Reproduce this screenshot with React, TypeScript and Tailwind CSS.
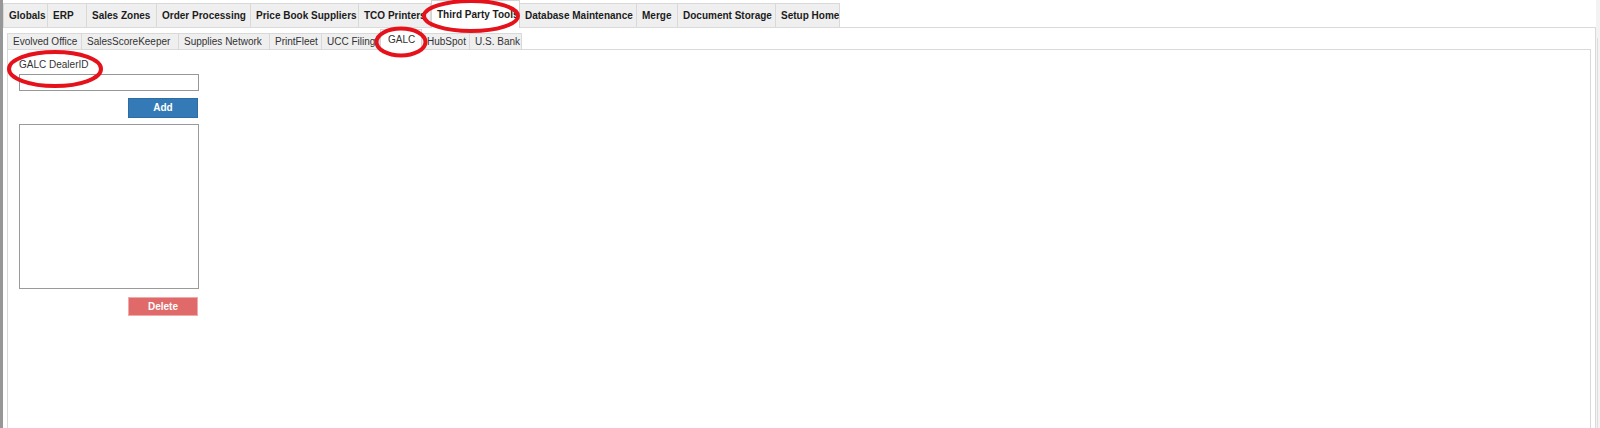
import React from 'react';

const TOP_TABS: { label: string; width: number; active?: boolean }[] = [
  { label: 'Globals', width: 45 },
  { label: 'ERP', width: 39 },
  { label: 'Sales Zones', width: 70 },
  { label: 'Order Processing', width: 94 },
  { label: 'Price Book Suppliers', width: 108 },
  { label: 'TCO Printers', width: 72 },
  { label: 'Third Party Tools', width: 89, active: true },
  { label: 'Database Maintenance', width: 117 },
  { label: 'Merge', width: 41 },
  { label: 'Document Storage', width: 98 },
  { label: 'Setup Home', width: 64 },
];

const SUB_TABS: { label: string; width: number; active?: boolean }[] = [
  { label: 'Evolved Office', width: 75 },
  { label: 'SalesScoreKeeper', width: 97 },
  { label: 'Supplies Network', width: 91 },
  { label: 'PrintFleet', width: 52 },
  { label: 'UCC Filing', width: 58 },
  { label: 'GALC', width: 42, active: true },
  { label: 'HubSpot', width: 48 },
  { label: 'U.S. Bank', width: 52 },
];

export default function App() {
  return (
    <div className="relative h-[428px] w-[1600px] overflow-hidden bg-white font-['Liberation_Sans',Arial,sans-serif]">
      <div className="flex h-full">
        {/* left window edge */}
        <div className="w-[3px] shrink-0 bg-[#979797]" />

        <div className="flex min-w-0 flex-1 flex-col pt-[3px]">
          {/* ── Main tabs ─────────────────────────────────────── */}
          <div className="relative z-10 flex h-[24px] items-end">
            {TOP_TABS.map((t, i) => (
              <div
                key={t.label}
                style={{ width: t.width }}
                className={`shrink-0 overflow-hidden whitespace-nowrap pl-[5px] text-[10px] font-bold text-[#1c1c1c] ${
                  t.active
                    ? '-mb-px h-[28px] border-x border-t border-[#d4d4d4] bg-white leading-[27px]'
                    : `h-[24px] border-t border-r border-[#d9d9d9] bg-[#efefef] leading-[23px] ${i === 0 ? 'border-l' : ''}`
                }`}
              >
                {t.label}
              </div>
            ))}
          </div>

          {/* ── Main panel ────────────────────────────────────── */}
          <div className="flex flex-1 flex-col border-t border-r border-[#dadada] pt-[5px] pl-[4px] pr-[4px]">
            {/* Sub tabs */}
            <div className="relative z-10 flex h-[16px] items-end">
              {SUB_TABS.map((t, i) => (
                <div
                  key={t.label}
                  style={{ width: t.width }}
                  className={`shrink-0 overflow-hidden whitespace-nowrap text-[10px] text-[#333] ${
                    t.active
                      ? '-mb-px h-[21px] border-x border-t border-[#d4d4d4] bg-white pl-[7px] leading-[19px]'
                      : `h-[16px] border-t border-r border-[#d9d9d9] bg-[#efefef] pl-[5px] leading-[15px] ${i === 0 ? 'border-l' : ''}`
                  }`}
                >
                  {t.label}
                </div>
              ))}
            </div>

            {/* GALC panel */}
            <div className="flex-1 border-x border-t border-[#d9d9d9] bg-white pl-[11px] pt-[9px]">
              <div className="w-[180px]">
                <div className="text-[10px] leading-[12px] text-[#333]">GALC DealerID</div>
                <input
                  type="text"
                  className="mt-[3px] block h-[17px] w-[180px] border border-[#979797] bg-white px-1 text-[10px] outline-none"
                />
                <button className="mt-[7px] ml-[109px] block h-[20px] w-[70px] border border-[#2e6da4] bg-[#337ab7] text-[10px] font-bold leading-[18px] text-white">
                  Add
                </button>
                <div className="mt-[6px] h-[165px] w-[180px] border border-[#9a9a9a] bg-white" />
                <button className="mt-[8px] ml-[109px] block h-[19px] w-[70px] border border-[#f1a9a9] bg-[#e06a6a] text-[10px] font-bold leading-[17px] text-white">
                  Delete
                </button>
              </div>
            </div>
          </div>
        </div>

        {/* right window edge */}
        <div className="flex w-[4px] shrink-0 flex-col bg-[#f3f3f3]">
          <div className="h-[38px]" />
          <div className="ml-[1px] flex-1 border-l border-[#dedede]" />
        </div>
      </div>

      {/* red annotation circles */}
      <svg className="pointer-events-none absolute inset-0 z-20" width="1600" height="428">
        <ellipse cx="471" cy="16" rx="47" ry="15" fill="none" stroke="#e5121b" strokeWidth="4" />
        <ellipse cx="401" cy="42" rx="24.5" ry="13.5" fill="none" stroke="#e5121b" strokeWidth="4" />
        <ellipse cx="55" cy="69" rx="46" ry="17" fill="none" stroke="#e5121b" strokeWidth="4" />
      </svg>
    </div>
  );
}
